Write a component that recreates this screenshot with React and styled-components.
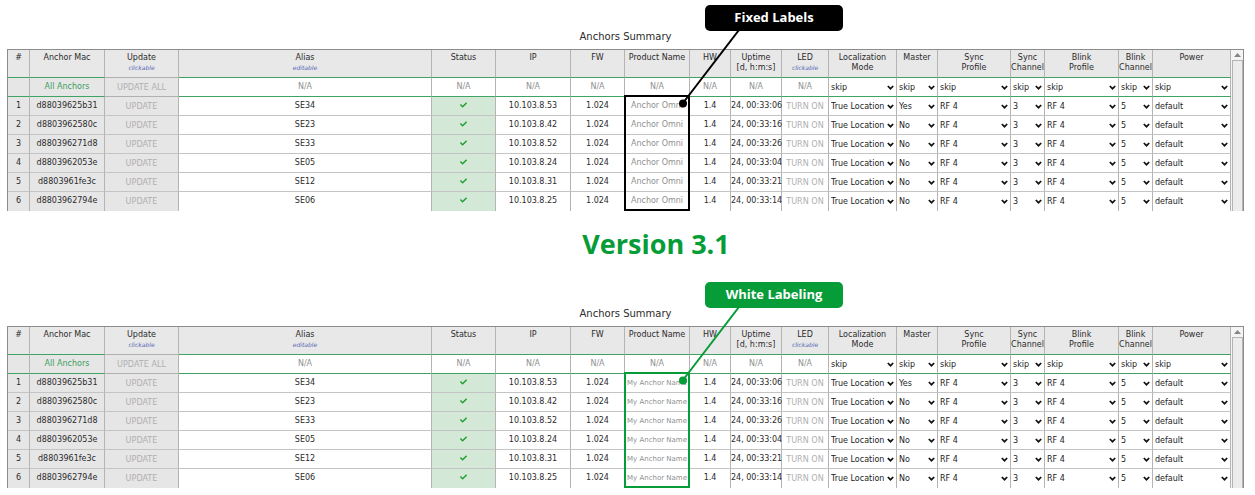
import React from 'react';
import styled, { createGlobalStyle } from 'styled-components';
import { FaCheck } from 'react-icons/fa';


const GlobalStyle = createGlobalStyle`
* {
    box-sizing:border-box;
}

body {
    margin:0;
    background-color:#ffffff;
    color:#2b2b2b;
    font-family:"DejaVu Sans", Verdana, sans-serif;
    font-size:8px;
}
`

const Page = styled.main`
    padding:0px 11px 0px 7px;
`

const Panel = styled.section`
    position:relative;
    padding-top:29px;
`

const Title = styled.h2`
    margin:0px 0px 5px;
    font-size:10px;
    font-weight:400;
    line-height:15px;
    text-align:center;
`

const Version = styled.h1`
    margin:0px;
    padding-left:61px;
    color:#069c38;
    font-family:"Open Sans", sans-serif;
    font-size:27px;
    font-weight:700;
    line-height:66px;
    text-align:center;
`

const Frame = styled.div`
    display:flex;
    border:1px solid #8c8c8c;
    border-bottom:none;
`

const Table = styled.table`
    flex:1;
    min-width:0;
    width:100%;
    table-layout:fixed;
    border-collapse:separate;
    border-spacing:0px;
`

const Col = styled.col`
    width:${({ $width }) => ($width ? `${$width}px` : 'auto')};
`

const HeadCell = styled.th`
    height:28px;
    padding:3px 0px 0px;
    background-color:#e8e8e8;
    border-right:1px solid #b4b4b4;
    border-bottom:1px solid ${({ $muted }) => ($muted ? '#b0b0b0' : '#3fa463')};
    font-weight:400;
    line-height:10px;
    text-align:center;
    vertical-align:top;
    white-space:nowrap;
`

const Hint = styled.em`
    display:block;
    color:#5566b5;
    font-size:6px;
`

const Cell = styled.td`
    height:19px;
    padding:0px;
    background-color:${({ $bg }) => $bg || '#ffffff'};
    border-right:1px solid #b4b4b4;
    border-bottom:1px solid ${({ $line }) => $line || '#c4c4c4'};
    color:${({ $color }) => $color || '#2b2b2b'};
    font-size:${({ $small }) => ($small ? '7px' : '8px')};
    line-height:18px;
    text-align:center;
    vertical-align:top;
    white-space:nowrap;

    tr:last-child > & {
        border-bottom:none;
    }
`

const Check = styled(FaCheck)`
    display:block;
    width:7px;
    height:8px;
    margin:4px auto;
    color:#1f9e2e;
`

const Action = styled.button`
    display:block;
    width:100%;
    padding:0px;
    background:none;
    border:none;
    color:#b0b0b0;
    cursor:pointer;
    font-family:"DejaVu Sans Condensed", "Open Sans", sans-serif;
    font-size:9px;
    line-height:18px;
    text-align:center;
`

const AliasInput = styled.input`
    display:block;
    width:100%;
    height:18px;
    padding:0px;
    background:none;
    border:none;
    color:inherit;
    font:inherit;
    text-align:center;
`

const SelectBox = styled.div`
    position:relative;
`

const Select = styled.select`
    display:block;
    appearance:none;
    width:100%;
    height:18px;
    padding:2px 0px 0px 2px;
    background:none;
    border:none;
    color:#1c1c1c;
    font-family:inherit;
    font-size:8px;
    line-height:16px;
`

const Arrow = styled.svg`
    position:absolute;
    top:7px;
    right:2px;
    width:7px;
    height:5px;
    pointer-events:none;
`

const ScrollTrack = styled.div`
    flex:none;
    display:flex;
    flex-direction:column;
    align-items:center;
    width:12px;
    padding-left:1px;
    background-color:#f4f4f4;
`

const ScrollUp = styled.svg`
    width:11px;
    height:10px;
`

const Thumb = styled.div`
    flex:1;
    align-self:stretch;
    background-color:#ececec;
    border:1px solid #b4b4b4;
    border-bottom:none;
`

/* annotations drawn over the table, anchored to the fixed columns on the right */
const Highlight = styled.div`
    position:absolute;
    right:554px;
    bottom:0px;
    width:66px;
    height:116px;
    border:2px solid ${({ $color }) => $color};
    pointer-events:none;
`

const Callout = styled.div`
    position:absolute;
    top:5px;
    right:401px;
    width:138px;
    background-color:${({ $color }) => $color};
    border-radius:5px;
    color:#ffffff;
    font-family:"Open Sans", sans-serif;
    font-size:13px;
    font-weight:700;
    line-height:25px;
    padding-bottom:1px;
    text-align:center;
`

const Pointer = styled.svg`
    position:absolute;
    top:30px;
    right:502px;
    width:64px;
    height:80px;
    pointer-events:none;
`


const columns = [
    { key: 'index', label: '#', width: 22 },
    { key: 'mac', label: 'Anchor Mac', width: 75 },
    { key: 'update', label: 'Update', hint: 'clickable', width: 74 },
    { key: 'alias', label: 'Alias', hint: 'editable' },
    { key: 'status', label: 'Status', width: 64 },
    { key: 'ip', label: 'IP', width: 75 },
    { key: 'fw', label: 'FW', width: 54 },
    { key: 'product', label: 'Product Name', width: 65 },
    { key: 'hw', label: 'HW', width: 41 },
    { key: 'uptime', label: 'Uptime', second: '[d, h:m:s]', width: 51 },
    { key: 'led', label: 'LED', hint: 'clickable', width: 47 },
    { key: 'mode', label: 'Localization', second: 'Mode', width: 68 },
    { key: 'master', label: 'Master', width: 41 },
    { key: 'syncProfile', label: 'Sync', second: 'Profile', width: 73 },
    { key: 'syncChannel', label: 'Sync', second: 'Channel', width: 34 },
    { key: 'blinkProfile', label: 'Blink', second: 'Profile', width: 74 },
    { key: 'blinkChannel', label: 'Blink', second: 'Channel', width: 34 },
    { key: 'power', label: 'Power', width: 78 },
]

const anchors = [
    { mac: 'd88039625b31', alias: 'SE34', ip: '10.103.8.53', uptime: '24, 00:33:06', master: 'Yes' },
    { mac: 'd8803962580c', alias: 'SE23', ip: '10.103.8.42', uptime: '24, 00:33:16', master: 'No' },
    { mac: 'd880396271d8', alias: 'SE33', ip: '10.103.8.52', uptime: '24, 00:33:26', master: 'No' },
    { mac: 'd8803962053e', alias: 'SE05', ip: '10.103.8.24', uptime: '24, 00:33:04', master: 'No' },
    { mac: 'd8803961fe3c', alias: 'SE12', ip: '10.103.8.31', uptime: '24, 00:33:21', master: 'No' },
    { mac: 'd8803962794e', alias: 'SE06', ip: '10.103.8.25', uptime: '24, 00:33:14', master: 'No' },
]

const GREEN_LINE = '#3fa463'
const GREY = '#e6e6e6'
const MUTED = '#8f8f8f'


function Dropdown({ value, label }) {
    return (
        <SelectBox>
            <Select aria-label={label} defaultValue={value}>
                <option>{value}</option>
            </Select>
            <Arrow viewBox='0 0 7 5' aria-hidden='true'>
                <path d='M0.8 1L3.5 3.7L6.2 1' fill='none' stroke='#111111' strokeWidth='1.7' />
            </Arrow>
        </SelectBox>
    )
}

function AnchorRow({ anchor, index, product, smallProduct }) {
    const name = anchor.mac

    return (
        <tr>
            <Cell $bg={GREY}>{index + 1}</Cell>
            <Cell $bg={GREY}>{anchor.mac}</Cell>
            <Cell $bg={GREY}><Action type='button'>UPDATE</Action></Cell>
            <Cell><AliasInput aria-label={`Alias of ${name}`} defaultValue={anchor.alias} /></Cell>
            <Cell $bg='#d3e8d6'><Check /></Cell>
            <Cell>{anchor.ip}</Cell>
            <Cell>1.024</Cell>
            <Cell $color={MUTED} $small={smallProduct}>{product}</Cell>
            <Cell>1.4</Cell>
            <Cell>{anchor.uptime}</Cell>
            <Cell><Action type='button'>TURN ON</Action></Cell>
            <Cell><Dropdown label={`Localization mode of ${name}`} value='True Location' /></Cell>
            <Cell><Dropdown label={`Master of ${name}`} value={anchor.master} /></Cell>
            <Cell><Dropdown label={`Sync profile of ${name}`} value='RF 4' /></Cell>
            <Cell><Dropdown label={`Sync channel of ${name}`} value='3' /></Cell>
            <Cell><Dropdown label={`Blink profile of ${name}`} value='RF 4' /></Cell>
            <Cell><Dropdown label={`Blink channel of ${name}`} value='5' /></Cell>
            <Cell><Dropdown label={`Power of ${name}`} value='default' /></Cell>
        </tr>
    )
}

function AllAnchorsRow() {
    return (
        <tr>
            <Cell $bg={GREY} $line={GREEN_LINE}></Cell>
            <Cell $bg={GREY} $line={GREEN_LINE} $color='#3a9e5c'>All Anchors</Cell>
            <Cell $bg={GREY} $line='#b0b0b0'><Action type='button'>UPDATE ALL</Action></Cell>
            {columns.slice(3, 11).map((column) => (
                <Cell key={column.key} $line={GREEN_LINE} $color={MUTED}>N/A</Cell>
            ))}
            {columns.slice(11).map((column) => (
                <Cell key={column.key} $line={GREEN_LINE}>
                    <Dropdown label={`${column.label} ${column.second || ''} of all anchors`} value='skip' />
                </Cell>
            ))}
        </tr>
    )
}

function AnchorsPanel({ callout, color, product, smallProduct }) {
    return (
        <Panel>
            <Title>Anchors Summary</Title>
            <Frame>
                <Table>
                    <colgroup>
                        {columns.map((column) => <Col key={column.key} $width={column.width} />)}
                    </colgroup>
                    <thead>
                        <tr>
                            {columns.map((column) => (
                                <HeadCell key={column.key} scope='col' $muted={column.key === 'update'}>
                                    {column.label}
                                    {column.second && <><br />{column.second}</>}
                                    {column.hint && <Hint>{column.hint}</Hint>}
                                </HeadCell>
                            ))}
                        </tr>
                    </thead>
                    <tbody>
                        <AllAnchorsRow />
                        {anchors.map((anchor, index) => (
                            <AnchorRow
                                key={anchor.mac}
                                anchor={anchor}
                                index={index}
                                product={product}
                                smallProduct={smallProduct}
                            />
                        ))}
                    </tbody>
                </Table>
                <ScrollTrack>
                    <ScrollUp viewBox='0 0 11 10' aria-hidden='true'>
                        <path d='M2 7L5.5 3L9 7Z' fill='#858585' />
                    </ScrollUp>
                    <Thumb />
                </ScrollTrack>
            </Frame>

            <Highlight $color={color} />
            <Pointer viewBox='0 0 64 80' aria-hidden='true'>
                <path d='M61 0L5 73' stroke={color} strokeWidth='2' />
                <circle cx='5' cy='73.5' r='4' fill={color} />
            </Pointer>
            <Callout $color={color}>{callout}</Callout>
        </Panel>
    )
}


function App() {
    return (
        <Page>
            <GlobalStyle />
            <AnchorsPanel callout='Fixed Labels' color='#000000' product='Anchor Omni' />
            <Version>Version 3.1</Version>
            <AnchorsPanel callout='White Labeling' color='#069c38' product='My Anchor Name' smallProduct />
        </Page>
    );
}

export default App;
